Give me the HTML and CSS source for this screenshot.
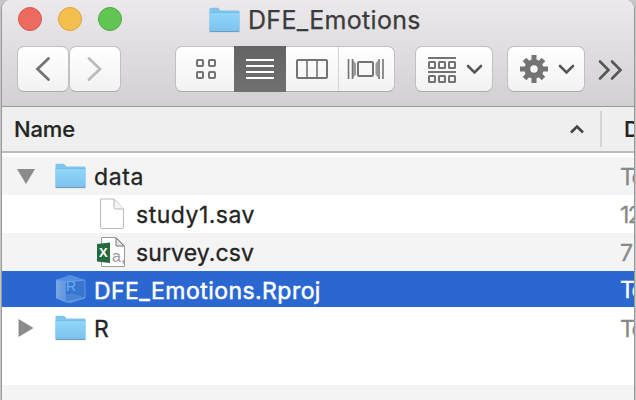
FILE: index.html
```html
<!DOCTYPE html>
<html lang="en">
<head>
<meta charset="utf-8">
<title>DFE_Emotions</title>
<link rel="stylesheet" href="styles.css">
</head>
<body>
<svg class="defs" aria-hidden="true">
  <defs>
    <linearGradient id="fold" x1="0" y1="0" x2="0" y2="1"><stop offset="0" stop-color="#91d6fa"/><stop offset="1" stop-color="#7bc3ef"/></linearGradient>
    <linearGradient id="cube" x1="0" y1="0" x2="1" y2="0"><stop offset="0" stop-color="#78a9e6"/><stop offset="1" stop-color="#356fc9"/></linearGradient>
    <symbol id="folder" viewBox="0 0 31 26">
      <path d="M.5 2Q.5.8 1.7.8H9l2.5 2.7h17.8q1.2 0 1.2 1.2V24H.5Z" fill="#7fc5ec"/>
      <path d="M.5 5.5h30V23.5q0 1-1 1h-28q-1 0-1-1Z" fill="url(#fold)"/>
      <path d="M.5 5.5h30" stroke="#6eb9e3" stroke-width=".8"/>
      <path d="M.6 24.6h29.8" stroke="#6699b5"/>
    </symbol>
  </defs>
</svg>
<div class="window">
  <header class="chrome">
    <div class="titlebar">
      <div class="lights"><i class="light red"></i><i class="light amber"></i><i class="light green"></i></div>
      <svg class="folder"><use href="#folder"/></svg>
      <span class="title">DFE_Emotions</span>
    </div>
    <div class="toolbar">
      <div class="btn nav"><svg width="50" height="44" viewBox="0 0 50 44"><path d="M30.500 11.500 19.500 22 30.500 32.500" class="st thick"/></svg></div>
      <div class="btn nav next"><svg width="50" height="44" viewBox="0 0 50 44"><path d="M19 11.500 30 22 19 32.500" class="st thick dim"/></svg></div>
      <div class="btn views">
        <div class="view first"><svg width="58" height="44" viewBox="0 0 58 44"><g class="st"><rect x="21" y="13" width="6" height="6" rx="1"/><rect x="33" y="13" width="6" height="6" rx="1"/><rect x="21" y="25" width="6" height="6" rx="1"/><rect x="33" y="25" width="6" height="6" rx="1"/></g></svg></div>
        <div class="view active"><svg width="52" height="46" viewBox="0 0 52 46"><path d="M12 14h28M12 20h28M12 26h28M12 32h28" stroke="#fff" stroke-width="2"/></svg></div>
        <div class="view cols"><svg width="52" height="44" viewBox="0 0 52 44"><rect class="st" x="11" y="13" width="30" height="18" rx="1"/><path class="st thin" d="M21 13v18M31 13v18"/></svg></div>
        <div class="view flow"><svg width="55" height="44" viewBox="0 0 55 44"><g class="st"><path class="thin" d="M9.500 12v20M44 12v20"/><path class="thin" d="M13.500 12v20M40 12v20"/><path d="M14 13l3 3.500v11l-3 3.500ZM39.500 13l-3 3.500v11l3 3.500Z" fill="#999" stroke="none"/><rect x="19" y="15" width="15" height="14" rx="1"/></g></svg></div>
      </div>
      <div class="btn arrange"><svg width="77" height="44" viewBox="0 0 77 44"><g class="st"><path d="M12 11h28M12 25h28"/><rect x="13" y="15" width="6" height="6" rx=".5"/><rect x="23" y="15" width="6" height="6" rx=".5"/><rect x="33" y="15" width="6" height="6" rx=".5"/><rect x="13" y="29" width="6" height="6" rx=".5"/><rect x="23" y="29" width="6" height="6" rx=".5"/><rect x="33" y="29" width="6" height="6" rx=".5"/></g><path class="st dark" d="M52 19 58.500 25.500 65 19"/></svg></div>
      <div class="btn action"><svg width="76" height="44" viewBox="0 0 76 44"><g transform="translate(26 22)" fill="none" stroke="#737373"><circle r="6.700" stroke-width="6"/><path stroke-width="5" d="M0-14V-8M0 8v6M-14 0h6M8 0h6M-9.500-9.500-6-6M6 6 9.500 9.500M-9.500 9.500-6 6M6-6 9.500-9.500"/></g><path class="st dark" d="M52 19 58.500 25.500 65 19"/></svg></div>
      <svg class="more" width="26" height="44" viewBox="0 0 26 44"><path class="st dark" d="M2 15.500 10.500 24 2 32.500M14 15.500 22.500 24 14 32.500"/></svg>
    </div>
  </header>
  <div class="columns">
    <span class="head">Name</span>
    <svg class="sort" width="16" height="12" viewBox="0 0 16 12"><path class="st caret" d="M2 9.500 8 3.500 14 9.500"/></svg>
    <span class="head second">Date</span>
  </div>
  <main class="list">
    <div class="row stripe">
      <svg class="disclosure" viewBox="0 0 18 16"><path d="M0 1h18L9 16Z" fill="#8b8b8b"/></svg>
      <svg class="folder"><use href="#folder"/></svg>
      <span class="name n1">data</span><span class="date">Today</span>
    </div>
    <div class="row child">
      <svg class="file" viewBox="0 0 29 32"><path d="M4.500 1H18L27.500 11V29q0 1.500-1.500 1.500H6q-1.500 0-1.500-1.500Z" fill="#fff" stroke="#bbb"/><path d="M18 1.500v8q0 1.500 1.500 1.500h8" fill="#f5f5f5" stroke="#b5b5b5"/></svg>
      <span class="name n2">study1.sav</span><span class="date">12</span>
    </div>
    <div class="row stripe child">
      <svg class="file" viewBox="0 0 29 32"><path d="M5.500 1.500H20L28.500 10V30.500h-23Z" fill="#fff" stroke="#999"/><path d="M20 2v8h8Z" fill="#e5e5e5" stroke="#777"/><path d="M1 8 14 6.500V27L1 25.500Z" fill="#25693f"/><text x="3" y="21" class="x">X</text><text x="16" y="26" class="a">a,</text></svg>
      <span class="name n3">survey.csv</span><span class="date">7</span>
    </div>
    <div class="row selected">
      <i class="disclosure"></i>
      <svg class="folder project" viewBox="0 0 31 30"><path d="M1 6 15.500 1 30 6V24L15.500 29 1 24Z" fill="url(#cube)"/><path d="M1 6 15.500 1 30 6 11 8Z" fill="#558ee0"/><path d="M11 8 30 6V24L11 28Z" fill="#3875cf"/><path d="M1 24 17 20 30 24 15 29Z" fill="#69a0e655" stroke="#5c92df" stroke-width=".6"/><path d="M1 6 11 8 30 6M1 24 11 28 30 24V6" fill="none" stroke="#6fa5e7" stroke-width=".8"/><text x="11" y="17" class="r">R</text></svg>
      <span class="name n4">DFE_Emotions.Rproj</span><span class="date">Today</span>
    </div>
    <div class="row">
      <svg class="disclosure" viewBox="0 0 18 18"><path d="M1.500 0v18L16.500 9Z" fill="#8b8b8b"/></svg>
      <svg class="folder"><use href="#folder"/></svg>
      <span class="name">R</span><span class="date">Today</span>
    </div>
    <div class="row"></div>
    <div class="row stripe"></div>
  </main>
</div>
</body>
</html>
```
FILE: styles.css
```css
* { box-sizing: border-box; }
body { margin: 0; width: 636px; height: 400px; overflow: hidden; background: #c6c6c6; font-family: Inter, "Liberation Sans", sans-serif; font-size: 23px; color: #242424; }
svg { display: block; flex: none; }
.defs { position: absolute; width: 0; height: 0; }
.window { width: 634px; height: 400px; margin-left: 1px; border: solid #999; border-width: 0 1px; border-radius: 9px 9px 0 0; overflow: hidden; background: #fff; }
.chrome { height: 107px; background: linear-gradient(#ebe9eb, #d2d0d2); border-bottom: 1px solid #999; }
.titlebar { display: flex; height: 46px; padding: 7px 0 0 16px; }
.lights { display: flex; gap: 16px; width: 191px; }
.light { width: 24px; height: 24px; border-radius: 50%; border: 1px solid; }
.red { background: #ed6a5f; border-color: #d8584e; }
.amber { background: #f5bf4f; border-color: #dba23e; }
.green { background: #61c554; border-color: #4dab40; }
.folder { width: 31px; height: 26px; }
.title { margin-left: 8px; line-height: 27px; font-size: 25px; color: #3b3b3b; letter-spacing: .3px; -webkit-text-stroke: .25px; }
.toolbar { display: flex; padding-left: 15px; }
.btn { height: 46px; border: 1px solid #c2c0c2; border-bottom-color: #adabad; border-radius: 7px; background: linear-gradient(#fff, #f2f2f2); flex: none; }
.nav { width: 52px; }
.views { display: flex; width: 220px; margin-left: 54px; }
.first { width: 58px; }
.active { width: 52px; height: 46px; margin-top: -1px; background: linear-gradient(#646464, #707070); }
.cols { width: 53px; border-right: 1px solid #d3d3d3; }
.arrange { width: 78px; margin-left: 20px; }
.action { width: 78px; margin-left: 14px; }
.more { margin-left: 13px; }
.st { fill: none; stroke: #737373; stroke-width: 2; }
.thin { stroke-width: 1.6; }
.thick { stroke-width: 2.8; stroke-linecap: round; }
.dim { stroke: #bcbcbc; }
.dark { stroke: #565656; stroke-width: 2.6; stroke-linecap: round; }
.caret { stroke: #444; stroke-width: 2.6; }
.columns { display: flex; align-items: center; height: 46px; padding-left: 12px; background: #efefef; border-bottom: 2px solid #bcbcbc; }
.head { width: 555px; flex: none; font-size: 22px; font-weight: 500; letter-spacing: -.15px; -webkit-text-stroke: .2px; }
.sort { margin-right: 15px; }
.second { width: 80px; height: 36px; padding-left: 22px; border-left: 2px solid #d3d3d3; line-height: 36px; }
.list { padding-top: 4px; }
.row { display: flex; align-items: center; height: 38px; padding-left: 15px; white-space: nowrap; }
.stripe { background: #f4f4f4; }
.selected { height: 36px; margin-bottom: 2px; background: #2b67d1; color: #fff; }
.disclosure { width: 18px; height: 18px; margin-right: 20px; flex: none; }
.name, .date { padding-top: 2px; -webkit-text-stroke: .3px; }
.name { width: 526px; margin-left: 8px; flex: none; }
.n1 { letter-spacing: .6px; }
.n2 { letter-spacing: .5px; }
.n3 { letter-spacing: .1px; }
.n4 { padding-top: 3px; letter-spacing: .45px; -webkit-text-stroke: .5px; }
.child { padding-left: 94px; }
.file { width: 29px; height: 32px; }
.child .name { width: 484px; margin-left: 11px; }
.date { color: #888; letter-spacing: -1.5px; flex: none; }
.selected .date { color: #fff; }
.project { height: 30px; }
.x { font: bold 13px "Liberation Sans", sans-serif; fill: #fff; }
.a { font: 16px "Liberation Sans", sans-serif; fill: #999; }
.r { font: 14px "Liberation Sans", sans-serif; fill: #65aef4; }
```
